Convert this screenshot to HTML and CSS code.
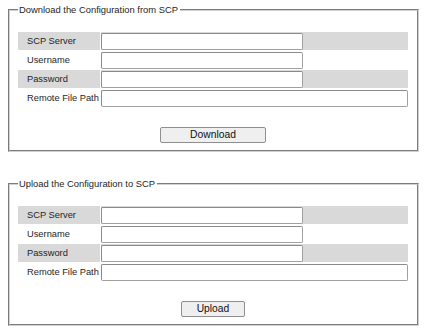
FILE: index.html
```html
<!DOCTYPE html>
<html>
<head>
<meta charset="utf-8">
<link rel="stylesheet" href="styles.css">
</head>
<body>
<div class="page">
  <fieldset class="box">
    <legend class="box-title">Download the Configuration from SCP</legend>
    <table class="form">
      <tr class="shade"><td class="lbl">SCP Server</td><td class="val"><input class="txt short" type="text"></td></tr>
      <tr><td class="lbl">Username</td><td class="val"><input class="txt short" type="text"></td></tr>
      <tr class="shade"><td class="lbl">Password</td><td class="val"><input class="txt short" type="password"></td></tr>
      <tr><td class="lbl">Remote File Path</td><td class="val"><input class="txt long" type="text"></td></tr>
    </table>
    <div class="actions"><button class="btn btn-download" type="button">Download</button></div>
  </fieldset>

  <fieldset class="box second">
    <legend class="box-title">Upload the Configuration to SCP</legend>
    <table class="form">
      <tr class="shade"><td class="lbl">SCP Server</td><td class="val"><input class="txt short" type="text"></td></tr>
      <tr><td class="lbl">Username</td><td class="val"><input class="txt short" type="text"></td></tr>
      <tr class="shade"><td class="lbl">Password</td><td class="val"><input class="txt short" type="password"></td></tr>
      <tr><td class="lbl">Remote File Path</td><td class="val"><input class="txt long" type="text"></td></tr>
    </table>
    <div class="actions"><button class="btn btn-upload" type="button">Upload</button></div>
  </fieldset>
</div>
</body>
</html>
```

FILE: styles.css
```css
html, body {
  margin: 0;
  padding: 0;
  background: #ffffff;
}
body {
  font-family: "Liberation Sans", Arial, sans-serif;
  font-size: 9.3px;
  color: #1e1e1e;
}
.page {
  padding: 4px 9px 0 8px;
}
.box {
  margin: 0;
  border: 2px groove #d0d0d0;
  padding: 12px 8px 7px 7px;
}
.box.second {
  margin-top: 26px;
}
.box-title {
  font-size: 9.4px;
  line-height: 12px;
  padding: 0 2px 0 1px;
  margin-left: 1px;
  color: #1e1e1e;
}
.form {
  width: 100%;
  border-collapse: separate;
  border-spacing: 1px;
  margin-top: 3px;
}
.form td {
  padding: 0;
  height: 18px;
  vertical-align: middle;
}
.shade td {
  background: #d9d9d9;
}
.lbl {
  width: 82px;
  padding-left: 9px !important;
  box-sizing: border-box;
  white-space: nowrap;
}
.val {
  font-size: 0;
}
.txt {
  box-sizing: border-box;
  height: 17px;
  margin: 0;
  border: 1px solid #a0a0a0;
  border-top-color: #8a8a8a;
  border-left-color: #8a8a8a;
  border-radius: 2px;
  background: #ffffff;
  padding: 0 2px;
  font-size: 10px;
  vertical-align: top;
}
.txt.short {
  width: 202px;
}
.txt.long {
  width: 100%;
}
.actions {
  display: flex;
  justify-content: center;
  margin-top: 19px;
}
.btn {
  box-sizing: border-box;
  height: 16px;
  margin: 0;
  padding: 0;
  border: 1px solid #8f8f8f;
  border-radius: 2px;
  background: #efefef;
  font-family: "Liberation Sans", Arial, sans-serif;
  font-size: 10.3px;
  line-height: 14px;
  color: #111111;
}
.btn-download {
  width: 106px;
}
.btn-upload {
  width: 64px;
}
```
